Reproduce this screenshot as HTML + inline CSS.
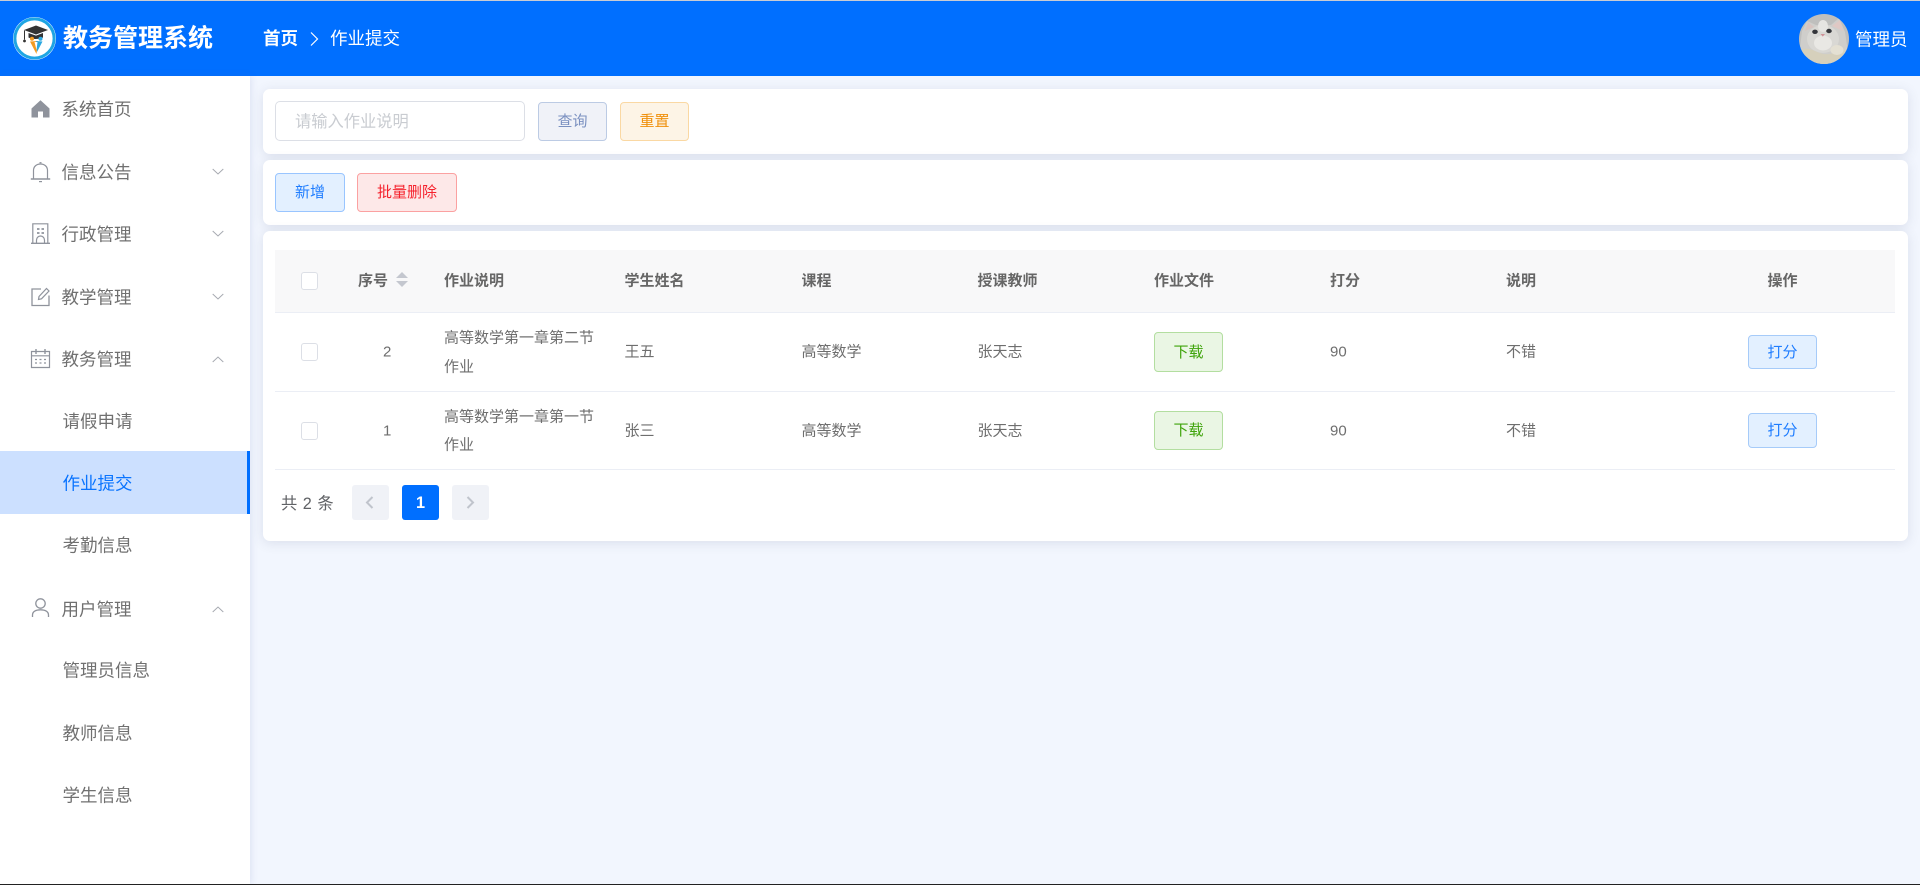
<!DOCTYPE html>
<html lang="zh-CN">
<head>
<meta charset="utf-8">
<title>作业提交</title>
<style>
html,body{margin:0;padding:0;width:1920px;height:885px;overflow:hidden;background:#f2f6fe}
body{position:relative;font-family:"Liberation Sans","Noto Sans CJK SC",sans-serif;color:#666}
.a{position:absolute;white-space:nowrap}
.t{position:absolute;white-space:nowrap;line-height:1;transform:translateY(-50%)}
#topline{left:0;top:0;width:1920px;height:1px;background:#c9ccd4}
#head{left:0;top:1px;width:1920px;height:75px;background:#006fff}
#side{left:0;top:76px;width:250px;height:808px;background:#fff;box-shadow:1px 0 7px rgba(80,100,170,.14)}
#bottom{left:0;top:884px;width:1920px;height:1px;background:#222}
.m{font-size:17.5px;color:#707070}
.card{position:absolute;left:263px;width:1645px;background:#fff;border-radius:7px;box-shadow:0 2px 12px rgba(60,70,110,.13)}
.btn{position:absolute;box-sizing:border-box;border:1px solid;border-radius:4px;font-size:15px;line-height:1;display:flex;align-items:center;justify-content:center}
.th{font-size:15px;font-weight:700;color:#666}
.td{font-size:15px;color:#6e6e6e}
.cb{position:absolute;box-sizing:border-box;width:17px;height:18px;left:301px;border:1px solid #dcdfe6;border-radius:3px;background:#fff}
.hr{position:absolute;left:275px;width:1620px;height:1px;background:#ebeef5}
.pg{position:absolute;top:485px;width:37px;height:35px;border-radius:3px;background:#f0f2f7}
svg{position:absolute;overflow:visible}
</style>
</head>
<body>
<div class="a" id="topline"></div>
<div class="a" id="head"></div>

<!-- logo -->
<svg style="left:12px;top:16px" width="45" height="45" viewBox="0 0 45 45">
  <circle cx="22.5" cy="22.5" r="21.5" fill="#fff"/>
  <circle cx="22.5" cy="22.5" r="19.6" fill="#fff" stroke="#1ea5e3" stroke-width="3"/>
  <path d="M12 14 24 9.5 36 14 24 18.5Z" fill="#333"/>
  <path d="M16.5 17v4.5c3 2 11 2 14.500 0V17l-7 2.600Z" fill="#333"/>
  <path d="M12.500 14.500v9" stroke="#333" stroke-width="1"/>
  <circle cx="12.500" cy="25" r="1.400" fill="#333"/>
  <path d="M18 25.500 26 25 24.500 38Z" fill="#f39a21"/>
  <path d="M24 25 30.500 25.500 25 36Z" fill="#2ba7e0"/>
  <circle cx="20" cy="22.800" r="2" fill="#f39a21"/>
  <circle cx="28.500" cy="22.800" r="2" fill="#2ba7e0"/>
  <path d="M22.500 26h3l-1 8Z" fill="#fff"/>
</svg>
<div class="t" style="left:63px;top:38.500px;font-size:25px;font-weight:700;color:#fff">教务管理系统</div>
<div class="t" style="left:263px;top:39px;font-size:17.500px;font-weight:700;color:#fff">首页</div>
<svg style="left:310px;top:32px" width="10" height="14" viewBox="0 0 10 14"><path d="M1 .5 7.500 7 1 13.500" fill="none" stroke="#fff" stroke-width="1.200"/></svg>
<div class="t" style="left:330px;top:39px;font-size:17.500px;color:#fff">作业提交</div>

<!-- avatar -->
<svg style="left:1799px;top:14px" width="50" height="50" viewBox="0 0 50 50">
  <defs><clipPath id="av"><circle cx="25" cy="25" r="25"/></clipPath></defs>
  <g clip-path="url(#av)">
    <rect width="50" height="50" fill="#bfbfbd"/>
    <path d="M3 17 8 7 17 11 32 11 40 4 46 18 49 38 50 50 0 50 1 34Z" fill="#cfcecb"/>
    <path d="M6 17 9 8 15 13Z" fill="#d8c4c0"/>
    <path d="M44 17 41 6 33 12Z" fill="#dfc8c4"/>
    <ellipse cx="24" cy="25" rx="16" ry="14" fill="#d9d8d4"/>
    <ellipse cx="24" cy="12" rx="5" ry="6" fill="#e6e5e2"/>
    <ellipse cx="24" cy="29" rx="9" ry="7.500" fill="#e9e8e4"/>
    <ellipse cx="16" cy="17.800" rx="2.800" ry="2.200" fill="#34363b"/>
    <ellipse cx="30" cy="17" rx="2.800" ry="2.200" fill="#34363b"/>
    <path d="M21.500 20h4.500l-2.200 2.600Z" fill="#cf9298"/>
    <path d="M0 36C10 32 16 38 24 40 32 41 38 38 46 36L50 50H0Z" fill="#d6d0bc"/>
    <ellipse cx="38" cy="36" rx="6.500" ry="5" fill="#e4e0d3"/>
  </g>
</svg>
<div class="t" style="left:1855px;top:39.500px;font-size:17.500px;color:#fff">管理员</div>

<!-- sidebar -->
<div class="a" id="side"></div>
<div class="a" style="left:0;top:451px;width:250px;height:63px;background:#cce0ff"></div>
<div class="a" style="left:247px;top:451px;width:3px;height:63px;background:#006fff"></div>

<svg style="left:30px;top:99px" width="21" height="20" viewBox="0 0 21 20"><path d="M10.500 1.200 1.500 9.500V18.500H8V12.500H13V18.500H19.500V9.500Z" fill="#8f939c"/></svg>
<svg style="left:30px;top:161px" width="21" height="22" viewBox="0 0 21 22" fill="none" stroke="#8f939c" stroke-width="1.200"><path d="M3.500 17.500V9.500C3.500 5.500 6.500 3 10.500 3S17.500 5.500 17.500 9.500V17.500"/><path d="M.8 18H20.200" stroke-width="1.400"/><path d="M9.500 1.700h2" /><path d="M9 20.600h3"/></svg>
<svg style="left:30px;top:223px" width="21" height="22" viewBox="0 0 21 22" fill="none" stroke="#8f939c" stroke-width="1.200"><path d="M2.800 20V.8H17.800V20"/><path d="M1 20.300H20" stroke-width="1.300"/><path d="M7 6h2.500M11.500 6H14M7 10h2.500M11.500 10H14" stroke-width="1.800"/><path d="M6.500 20v-3a4 4 0 0 1 8 0V20"/></svg>
<svg style="left:30px;top:286px" width="21" height="21" viewBox="0 0 21 21" fill="none" stroke="#8f939c" stroke-width="1.300"><path d="M11 3H2V19.500H19V9.500"/><path d="M8.500 13.500 9 10.500 16.500 2.500 19 5 11.500 12.800Z" stroke-width="1.200"/></svg>
<svg style="left:30px;top:348px" width="21" height="21" viewBox="0 0 21 21" fill="none" stroke="#8f939c" stroke-width="1.200"><path d="M1.500 3.500H19.500V19.500H1.500Z"/><path d="M1.500 7.800H19.500"/><path d="M6 1V6M15 1V6" stroke-width="1.400"/><path d="M5 11.500h2M9.500 11.500h2M14 11.500h2M5 15h2M9.500 15h2M14 15h2" stroke-width="1.300"/></svg>
<svg style="left:30px;top:597px" width="21" height="22" viewBox="0 0 21 22" fill="none" stroke="#8f939c" stroke-width="1.300"><circle cx="10.500" cy="6.500" r="4.700"/><path d="M2.500 20V18C2.500 14.500 6 12.800 10.500 12.800S18.500 14.500 18.500 18V20"/></svg>

<div class="t m" style="left:61.500px;top:110px">系统首页</div>
<div class="t m" style="left:61.500px;top:173px">信息公告</div>
<div class="t m" style="left:61.500px;top:235px">行政管理</div>
<div class="t m" style="left:61.500px;top:298px">教学管理</div>
<div class="t m" style="left:61.500px;top:360px">教务管理</div>
<div class="t m" style="left:62.500px;top:421.500px">请假申请</div>
<div class="t m" style="left:62.500px;top:483.500px;color:#0a74ff">作业提交</div>
<div class="t m" style="left:62.500px;top:546px">考勤信息</div>
<div class="t m" style="left:61.500px;top:610px">用户管理</div>
<div class="t m" style="left:62.500px;top:671px">管理员信息</div>
<div class="t m" style="left:62.500px;top:733.500px">教师信息</div>
<div class="t m" style="left:62.500px;top:796px">学生信息</div>

<svg style="left:212px;top:168px" width="12" height="8" viewBox="0 0 12 8"><path d="M.7 1 6 6 11.300 1" fill="none" stroke="#a6a9b0" stroke-width="1"/></svg>
<svg style="left:212px;top:230px" width="12" height="8" viewBox="0 0 12 8"><path d="M.7 1 6 6 11.300 1" fill="none" stroke="#a6a9b0" stroke-width="1"/></svg>
<svg style="left:212px;top:293px" width="12" height="8" viewBox="0 0 12 8"><path d="M.7 1 6 6 11.300 1" fill="none" stroke="#a6a9b0" stroke-width="1"/></svg>
<svg style="left:212px;top:355px" width="12" height="8" viewBox="0 0 12 8"><path d="M.7 7 6 2 11.300 7" fill="none" stroke="#a6a9b0" stroke-width="1"/></svg>
<svg style="left:212px;top:605px" width="12" height="8" viewBox="0 0 12 8"><path d="M.7 7 6 2 11.300 7" fill="none" stroke="#a6a9b0" stroke-width="1"/></svg>

<!-- cards -->
<div class="card" style="top:89px;height:65px"></div>
<div class="card" style="top:160px;height:65px"></div>
<div class="card" style="top:231px;height:310px"></div>

<div class="a" style="left:275px;top:101px;width:250px;height:40px;box-sizing:border-box;border:1px solid #dcdfe6;border-radius:5px;background:#fff"></div>
<div class="t" style="left:295px;top:122px;font-size:16.250px;color:#c9ccd1">请输入作业说明</div>
<div class="btn" style="left:538px;top:102px;width:69px;height:39px;background:#f0f2f8;border-color:#bccbe4;color:#7a90c0">查询</div>
<div class="btn" style="left:620px;top:102px;width:69px;height:39px;background:#fdf4e6;border-color:#fad8a3;color:#f0900c">重置</div>
<div class="btn" style="left:275px;top:173px;width:70px;height:39px;background:#e3f0ff;border-color:#99c5ff;color:#1f7dff">新增</div>
<div class="btn" style="left:357px;top:173px;width:100px;height:39px;background:#fde8e8;border-color:#fba1a1;color:#f5222d">批量删除</div>

<!-- table -->
<div class="a" style="left:275px;top:250px;width:1620px;height:62px;background:#f8f8f9"></div>
<div class="hr" style="top:312px"></div>
<div class="hr" style="top:391px"></div>
<div class="hr" style="top:469px"></div>

<div class="cb" style="top:272px"></div>
<div class="cb" style="top:343px"></div>
<div class="cb" style="top:422px"></div>

<div class="t th" style="left:358px;top:281px">序号</div>
<svg style="left:396px;top:272px" width="12" height="15" viewBox="0 0 12 15" fill="#c4c7cf"><path d="M6 0 12 6H0Z"/><path d="M6 15 12 9H0Z"/></svg>
<div class="t th" style="left:444px;top:281px">作业说明</div>
<div class="t th" style="left:624.500px;top:281px">学生姓名</div>
<div class="t th" style="left:801.500px;top:281px">课程</div>
<div class="t th" style="left:977.500px;top:281px">授课教师</div>
<div class="t th" style="left:1154px;top:281px">作业文件</div>
<div class="t th" style="left:1330px;top:281px">打分</div>
<div class="t th" style="left:1506px;top:281px">说明</div>
<div class="t th" style="left:1767.500px;top:281px">操作</div>

<div class="t td" style="left:383px;top:351.500px">2</div>
<div class="t td" style="left:444px;top:338px">高等数学第一章第二节</div>
<div class="t td" style="left:444px;top:367px">作业</div>
<div class="t td" style="left:624.500px;top:352px">王五</div>
<div class="t td" style="left:801.500px;top:352px">高等数学</div>
<div class="t td" style="left:977.500px;top:352px">张天志</div>
<div class="t td" style="left:1330px;top:352px">90</div>
<div class="t td" style="left:1506px;top:352px">不错</div>
<div class="btn" style="left:1154px;top:332px;width:69px;height:40px;background:#eaf6e4;border-color:#b3dea0;color:#3fa40b">下载</div>
<div class="btn" style="left:1748px;top:335px;width:69px;height:34px;background:#e3f0ff;border-color:#a6cbf9;color:#1f7dff">打分</div>

<div class="t td" style="left:383px;top:430.500px">1</div>
<div class="t td" style="left:444px;top:417px">高等数学第一章第一节</div>
<div class="t td" style="left:444px;top:445px">作业</div>
<div class="t td" style="left:624.500px;top:431px">张三</div>
<div class="t td" style="left:801.500px;top:431px">高等数学</div>
<div class="t td" style="left:977.500px;top:431px">张天志</div>
<div class="t td" style="left:1330px;top:431px">90</div>
<div class="t td" style="left:1506px;top:431px">不错</div>
<div class="btn" style="left:1154px;top:411px;width:69px;height:39px;background:#eaf6e4;border-color:#b3dea0;color:#3fa40b">下载</div>
<div class="btn" style="left:1748px;top:413px;width:69px;height:35px;background:#e3f0ff;border-color:#a6cbf9;color:#1f7dff">打分</div>

<!-- pagination -->
<div class="t" style="left:281px;top:503.500px;font-size:16.250px;word-spacing:1px;color:#606266">共 2 条</div>
<div class="pg" style="left:352px"></div>
<svg style="left:365px;top:496px" width="10" height="13" viewBox="0 0 10 13"><path d="M7.500 1 2 6.500 7.500 12" fill="none" stroke="#c0c4cc" stroke-width="2"/></svg>
<div class="pg" style="left:402px;background:#006fff"></div>
<div class="t" style="left:402px;width:37px;text-align:center;top:503px;font-size:16.250px;font-weight:700;color:#fff">1</div>
<div class="pg" style="left:452px"></div>
<svg style="left:465px;top:496px" width="10" height="13" viewBox="0 0 10 13"><path d="M2.500 1 8 6.500 2.500 12" fill="none" stroke="#c0c4cc" stroke-width="2"/></svg>

<div class="a" id="bottom"></div>
</body>
</html>
